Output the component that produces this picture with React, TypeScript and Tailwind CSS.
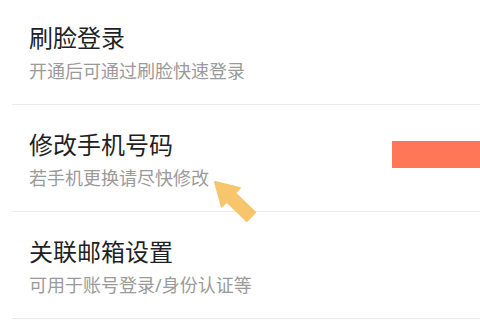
import React from "react"

const rows = [
	{ title: "刷脸登录", desc: "开通后可通过刷脸快速登录" },
	{ title: "修改手机号码", desc: "若手机更换请尽快修改", mark: true },
	{ title: "关联邮箱设置", desc: "可用于账号登录/身份认证等" },
]

function Arrow() {
	return (
		<svg
			className="absolute left-0 top-0 pointer-events-none"
			width="480"
			height="320"
			viewBox="0 0 480 320"
		>
			<g transform="translate(215 182) rotate(44)" fill="#f6c56c" stroke="#f6c56c" strokeWidth="2" strokeLinejoin="round">
				<polygon points="0,0 22,-13 22,-6 50,-6 50,6 22,6 22,13" />
			</g>
		</svg>
	)
}

export default function App() {
	return (
		<div
			className="relative h-[320px] w-[480px] overflow-hidden bg-white"
			style={{ fontFamily: '"Noto Sans", "Noto Sans CJK SC", sans-serif' }}
		>
			<div className="-mt-[2px] flex flex-col">
				{rows.map((row) => (
					<div key={row.title} className="relative">
						<div className="flex h-[106px] flex-col pl-[29px] pt-[24px]">
							<div className="text-[24px] leading-[32px] text-[#1f1f1f]">
								{row.title}
							</div>
							<div className="mt-[5px] text-[18px] leading-[24px] text-[#9a9a9a]">
								{row.desc}
							</div>
						</div>
						<div className="ml-[12px] h-px bg-[#ebebeb]" />
						{row.mark && (
							<div className="absolute left-[392px] top-[36px] h-[27px] w-[88px] bg-[#ff7757]" />
						)}
					</div>
				))}
			</div>
			<Arrow />
		</div>
	)
}
